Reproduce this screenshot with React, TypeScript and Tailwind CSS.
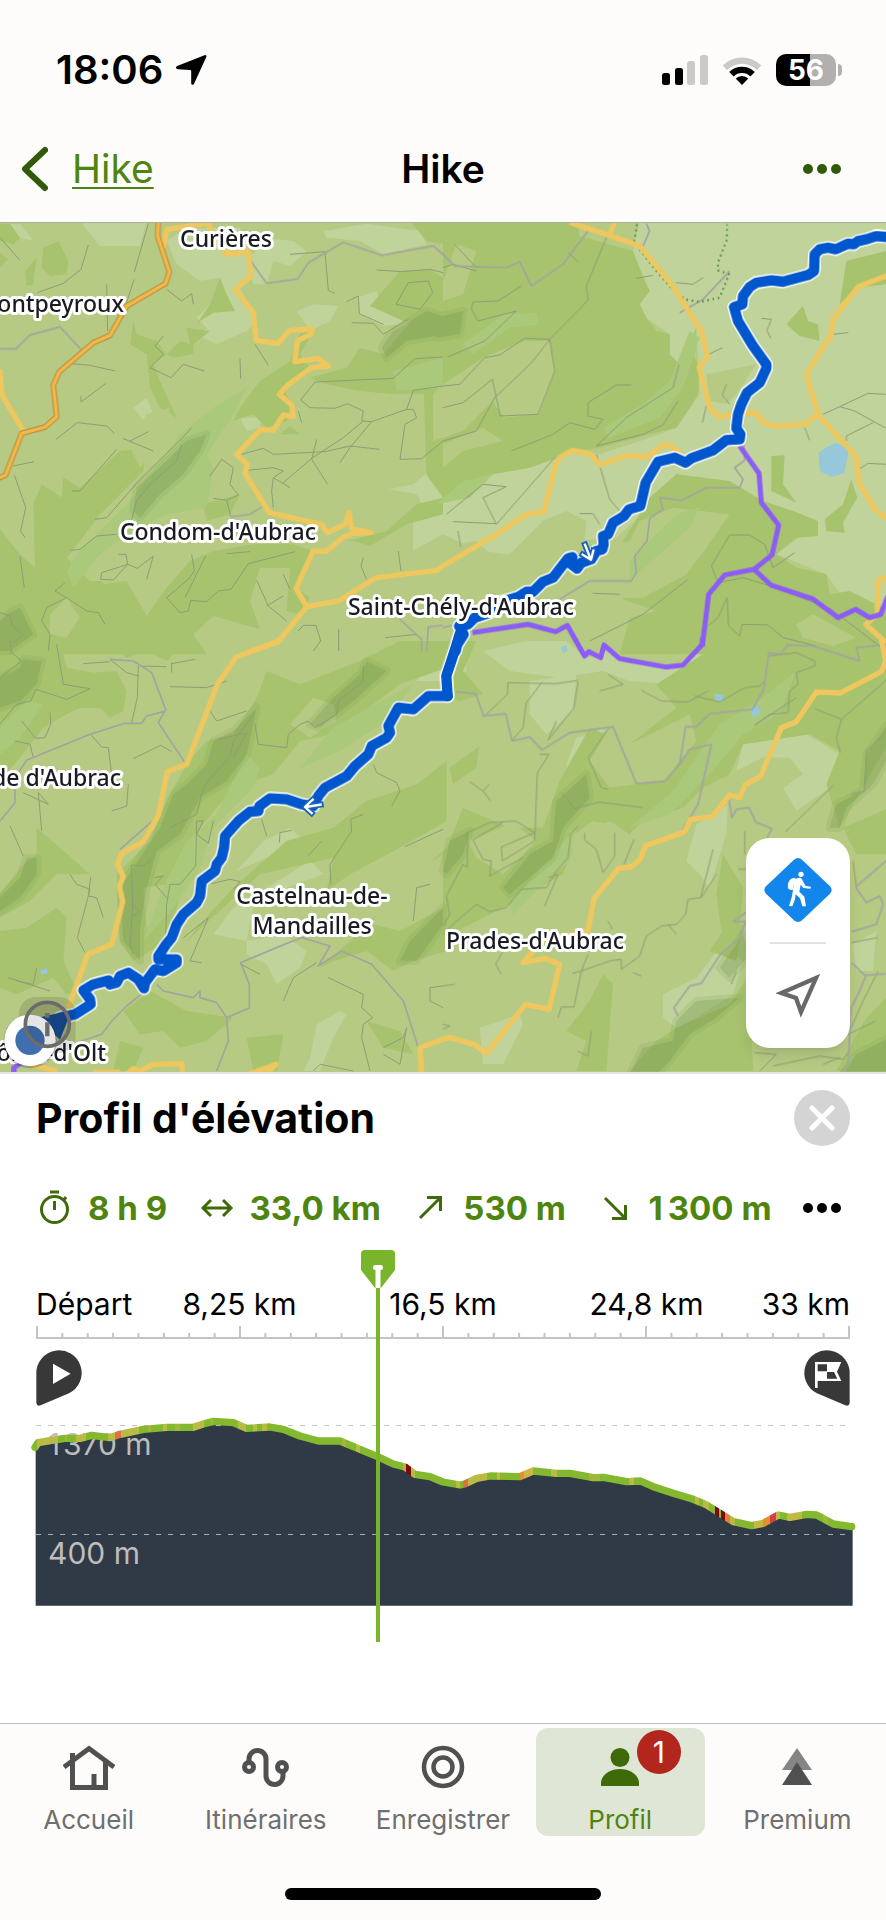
import { useState } from "react";

// Terrain is traced per quarter of the map, three units to a pixel
type Tile = {
    at: string;
    light: string;
    forest: string;
    base: string;
    valley: string;
    dark: string;
    paths: string;
    lanes: string;
    yellow: string;
    purple: string;
    route: string;
};

const tiles: Tile[] = [
    {
        at: "translate(1329 -6)",
        light: "M-90 900 0 830 150 760 260 740 400 690 470 700 620 650 700 620 770 520 760 320 710 430 680 400 680 340 610 290 590 250 620 210 570 90 590 0H1340V1200L1200 1130 1150 1060 1000 1000 1080 940 950 880 880 800 700 760 620 860 520 950 400 960 330 900 260 1000 160 1015 100 960-90 990Z",
        forest: "M0 0H400L410 45 570 90 600 170 620 210 590 250 610 290 640 330 680 340 680 400 710 430 760 320 750 400 770 440 765 520 740 560 700 620 620 640 470 680 400 690 260 740 150 760 0 830-50 760-60 430 0 300Z M620 830 700 760 860 780 960 840 1050 870 1125 900 1125 945 1060 950 1000 1000 1060 1040 1150 1060 1160 1120 1220 1110 1340 1170V1300H530L560 1190 640 1170 500 1120 540 960Z M1030 310 1080 255 1095 300 1125 310 1130 360 1070 345Z M985 705 1025 703 1020 790 1060 845 985 810Z M1225 775 1243 830 1200 905 1205 935 1150 930 1145 895 1200 850Z M1190 250 1210 120 1330 90V190L1240 200Z M10 745 120 690 180 710 70 800Z",
        base: "M-30 520 0 490 120 410 240 360 320 360 335 450 290 580 180 590 150 540 60 630-30 660Z M0 180 40 70 100 90 60 220 0 240Z M790 460 940 430 880 520 850 550 800 540Z M-90 990 0 940 110 990 200 1000 300 900 370 870 430 900 420 1000 560 960 590 900 690 860 860 880 790 980 730 1060 600 1130 480 1130 330 1200 0 1230Z M1060 1210 1110 1180 1240 1250 1170 1275 1080 1250Z M0 670 120 620 180 660 60 690 0 740Z",
        valley: "M480 620 600 550 680 480 740 330 770 350 720 500 650 590 500 650Z M60 370 180 280 280 275 290 310 200 320 90 400Z M560 1020 700 880 770 860 740 920 650 1000 560 1080Z M-20 850 60 780 150 760 80 830Z",
        dark: "M-20 290 60 270 50 340-20 350Z",
        paths: "M0 660 100 630 155 530 240 450 270 420 320 355 435 238 430 195 490 50 M320 355 335 450 285 580 172 585 148 475 60 545 0 560 M0 495 50 490 125 410 170 402 245 352 320 355 M235 195 165 240 90 243 85 265 105 300 220 270 125 360 15 408 M0 140 30 130 100 150 M565 492 520 492 435 545V585L480 595 455 625 380 605 330 640 205 690 M705 540 660 612 600 640 460 675 550 590 690 500 708 430 M838 380 797 400 M850 490 838 522 860 550 M790 555 778 605 M955 292 985 295 972 328 983 352 M1215 335 1170 340 M580 172 630 163 M700 185 750 190 780 170 M1140 580 1190 557 1275 517 1329 520 M1190 557 1235 570 1329 622 M1210 660V645L1290 605 M1248 745 1275 727 1329 730 M1085 620 1100 658 M10 880 120 790 190 797 120 830 160 910 335 710 M30 902 160 908 M460 700 500 835 530 870 M410 878H450L470 910 M805 1035 860 942H920L965 970 990 1040 1055 995 M805 1035 825 1085 900 1070 1000 1100 1165 1165 1329 1290 M852 1130 825 1190 795 1215 M852 1130 857 1215 890 1245 897 1210 975 1212 1020 1250 1120 1275 M450 1117 530 1120 M440 1260 600 1180 735 1075 M45 930 53 978 M35 70 100 140 M375 95 405 122",
        lanes: "M0 100 35 135 190 140 230 122 265 195 360 130 435 30 M710 275 780 235 860 150 M610 8 620 30 600 75 M900 610 905 718 875 740 900 775 890 800H790L715 838 650 830 660 865 620 892 612 960 575 1005 580 1055 565 1080H440L350 1135 0 1220",
        yellow: "M380 4 495 42 590 75 685 190 775 330 793 408 768 438 800 560 828 588 865 582 938 575 962 606 998 616 1085 610 1125 580 M500 40 515 4 M1335 163 1315 170 1245 198 1170 295 1163 343 1090 460 1125 580 1240 708 1248 785 1295 865 1335 895 M0 1035 160 940 250 880 303 873 335 738 350 710 388 688 440 698 472 732 550 703 612 707 667 668 715 695 M1335 1068 1305 1080 1303 1180 1268 1210 1329 1265",
        purple: "M890 675 948 757 955 845 1007 912 987 1002 933 1045 845 1062 797 1120 778 1275 M933 1045 985 1093 1110 1134 1185 1190 1238 1165 1280 1190 1313 1180 1335 1125 M88 1235 255 1210 338 1232 373 1213 400 1262",
        route: "M1350 50 1300 45 1270 55 1245 60 1232 70 1215 68 1178 85 1155 80 1130 85 1115 100 1113 150 1095 162 1020 182 985 178 940 185 920 198 900 225 898 250 873 258 885 300 930 375 970 430V442L950 485 912 515 895 550 885 580 880 622 892 640 890 655 850 657 810 688 745 712 728 725 695 710 645 722 608 785 592 855 558 865 543 885 510 905 495 940 480 945 482 970 478 985 460 990 445 1015 415 1025 402 1043 385 1030 388 1008 375 1012 330 1070 300 1082 270 1112 250 1112 225 1128 150 1150 140 1175 95 1190 75 1210 48 1215 62 1240 42 1272 38 1290",
    },
    {
        at: "translate(0 -6)",
        light: "M0 12 60 8 100 60 40 45Z M240 0H440L420 75H300Z M500 60 560 20H720L750 100 760 170 720 200 770 300 740 330 650 370 600 345 620 320 590 290 640 240 660 170 600 180 530 130Z M740 120 800 50 880 60 920 90 870 135 820 120 800 190 760 190Z M970 30 1100 8 1260 30 1280 70 1150 100 1080 60 980 50Z M1070 230 1130 210 1150 260 1230 260 1200 310 1150 315 1080 280Z M1165 805 1240 790 1329 715V830L1270 855 1250 820Z M890 270 940 250 1015 255 990 300 930 330Z M720 590 780 590 780 620 740 630Z M400 560 440 530 460 580 440 610Z M345 740 380 700 380 730Z",
        forest: "M0 925 20 950 60 1000 105 1040 100 850 125 790 185 830 190 770 240 800 360 690 440 680 430 750 300 880 240 960 200 1010 270 1080 380 1080 440 1185 500 1100 570 1020 640 990 760 970 880 970 940 990 890 1100 930 1130 900 1180 860 1170 870 1040 780 1040 750 1140 780 1225 640 1185 580 1240 620 1300H0Z M930 470 1040 440 1080 380 1150 400 1250 280 1340 260V520H1180L1080 510 980 490Z M1110 255 1200 150 1290 145 1329 170V310L1210 300Z M590 310 630 250 660 170 680 220 705 270 640 275 600 300Z M400 300 410 340 470 360 500 400 460 430 480 480 530 590 480 560 450 500 440 400 390 370Z M500 400 540 360 570 370 560 320 630 330 580 370V400L520 410Z M720 560 780 480 870 420 900 340 940 330 900 400 930 440 850 500 880 560 860 600 800 620 760 580 700 600Z M130 80 175 60 205 120 200 160 150 165 125 140Z M75 150 110 110 100 190 80 195Z M840 640 870 615 900 640Z M1040 960 1160 930 1250 850 1329 830V880L1220 910 1110 975 1060 960Z M0 8H30L60 50 40 70 0 60Z M0 95 25 115 0 140Z M1230 0H1340V70L1280 60Z M610 850 720 820 690 880 620 900Z",
        base: "M150 1180 200 1130 240 1190 200 1250 150 1240Z M300 1060 360 1010 400 1040 380 1080 310 1090Z M390 680 440 580 510 560 500 640 420 740Z",
        valley: "M240 990 400 830 540 640 640 560 740 500 700 580 620 700 640 740 620 860 500 880 400 930 300 1000 220 1100 200 1050Z M1180 450 1329 410V500L1190 510Z",
        dark: "M400 870 410 800 500 720 560 660 620 640 600 690 550 760 480 820 420 890Z M1145 380 1180 330 1280 270 1340 290V340L1220 360 1160 410Z M20 1180 60 1160 100 1240 30 1290 0 1290V1200Z",
        paths: "M0 50 60 118 M265 72 243 145 190 187 112 215 M445 8 403 153 M402 175 375 260 M320 190 323 330 M500 205 545 240 575 218 580 250 M450 440 513 470 550 430 613 450 M450 440 490 400 465 375 490 345 M215 428 270 433 345 450 M243 543 318 487 M243 525V543 M215 810 240 810 350 685 M285 895 320 890 420 775 548 650 575 620 M395 895 410 840 450 790 530 720 545 670 M168 655 232 605 320 615 343 637 M368 652 460 690 M390 660 445 632 M40 735 102 722 M43 762 77 860 62 930 75 950 M720 413 722 473 M765 370 805 433 M870 100 975 92 985 208 1005 218 M1040 242 1075 225 1078 278 1150 310 M1055 305 1120 307 1150 340 1225 295 M1130 147 1205 152 1290 145 1329 155 M1188 250 1225 185 1285 180 1298 215 1260 265Z M902 537 945 483 1180 472 1245 413 1329 408 M902 537 930 560 1005 562 1043 548 1090 570 1085 600 1115 602 1220 565 1240 508 1329 495 M1220 565H1240L1250 590 1215 610 1200 715 1265 713 1329 660 M725 700 790 682 820 700 975 692 1050 675 1138 685 M1090 600 1030 650 935 712 850 785 M1115 602 1050 680 1020 725 M950 655 935 715 983 790 M740 748 820 740 850 750 820 770 815 810 820 860 M820 770 870 800 M630 765 665 715 700 740 690 790 715 822 680 838 640 832 M680 838 692 885 M212 988 240 985 290 945 350 940 M355 1000H378L383 1030 305 1055 302 1075 340 1077 383 1030 412 1042 460 1005 440 1075 M575 1000 583 1050 570 1070 500 1130 540 1175 565 1170 572 1138 620 1142 655 1110 693 1105 745 1028 885 992 M617 1005 555 1130 M680 998 750 992 M770 1078 805 1155 860 1200 M800 1155 850 1125 M850 1060 870 1105 M1195 990 1203 1050 M1090 1010 1083 1035 1100 1075 M895 1230 910 1213H948L962 1260 940 1290 M1016 1225V1290 M1155 1250 1250 1240 M60 1005 73 1100 M200 1130 165 1110 195 1085 M200 1130 140 1160 125 1200 150 1240 145 1290 M200 1130 260 1170 295 1175 315 1210 M0 1175 30 1185 35 1210 68 1243 40 1265 M895 570 905 605",
        lanes: "M0 383H48L90 342 180 318 243 385 M752 120 800 187 893 174 925 125 1030 64 1145 103 1300 75 1329 100 M692 888 750 880 785 858 M1200 1195 1265 1255V1290 M1329 1213 1285 1218 1280 1290",
        yellow: "M635 4 500 25 490 80 M620 4 680 100 745 92 752 165 706 205 760 275 768 358 835 367 868 328 937 323 935 338 892 360 884 422 955 412 985 435 935 440 865 490 838 520 875 552 880 587 850 582 820 628 782 625 710 700 742 730 735 757 808 875 965 910 982 935 1035 910 1047 875 1055 923 1112 935 1060 937 1030 948 980 990 940 990 888 1102 920 1157 1015 1140 1128 1070 1310 1048 1329 1035 M920 1157 835 1262 740 1295 M0 445 5 520 70 630",
        purple: "",
        route: "",
    },
    {
        at: "translate(0 1254)",
        light: "M710 690 790 600 870 560 915 600 880 640 800 650Z M800 740 930 660 970 700 860 740 760 800 740 900 640 880 700 800Z M740 900 850 880 920 930 900 980 830 1030 800 970 740 940Z M930 1250 950 1150 1020 1110 1040 1120 1000 1190 960 1290H910Z M1250 120 1300 50 1329 40V120Z M560 390 600 360 640 370 670 400 600 410Z",
        forest: "M0 0H180L200 80 280 95 350 90 380 150 370 210 330 230 300 200 240 200 200 220 130 260 60 350 0 420Z M330 0H560L500 60 440 30 380 50Z M620 300 700 280 770 170 800 90 900 130 1080 60 1200 0H1340V80L1200 130 1000 280 900 300 820 400 700 440 600 560 560 700 500 900 400 960 360 900 350 700 450 600 500 480 560 370Z M560 900 600 850 700 740 860 600 1000 560 1100 480 1250 430 1340 360V540L1200 620 1050 700 980 750 1000 650 780 700Z M0 760 60 680 110 640V560L180 620 270 700H170L90 780 0 830Z M0 870 80 860 170 800 200 830 190 960 230 1050 200 1060 160 1010 50 1060 0 1040Z M370 1110 450 1050 560 1110 700 1130 620 1200 540 1220 490 1170 420 1180Z M960 980 1050 900 1130 820 1250 700 1340 620V930L1240 960 1180 990 1100 930 1000 960Z M360 1200 430 1220 400 1290H340Z M1100 1140 1200 1170 1240 1240 1150 1220Z M740 1190 850 1180 830 1290H760Z",
        base: "M870 250 940 170 1000 190 1010 240 930 290Z M1140 760 1250 690 1329 640V800L1200 870 1120 850Z M430 740 560 720 520 800 440 860Z",
        valley: "M480 760 560 600 650 520 740 340 780 380 760 440 640 560 600 680 520 800 430 900Z M1000 260 1160 170 1240 130 1160 240 1020 330 900 380Z M0 260 80 180 130 190 60 290 0 340Z",
        dark: "M770 200 740 340 680 420 600 470 540 580 470 630 440 740 420 860V960L370 900 360 740 480 560 520 460 560 430 620 370 640 300 700 270Z M0 110 60 80 70 55 125 60 110 130 60 180 0 200Z M930 250 1000 170 1080 100 1100 60 1160 90 1060 180 960 260Z M0 770 60 710 80 650 110 650 110 700 60 770 0 810Z M1200 960 1230 900 1300 830 1329 800V850L1250 960Z",
        paths: "M170 10 190 130 270 143 200 175 108 145 92 180 50 190 0 248 M30 0 35 35 65 60 0 110 M250 68 330 62 M330 55 380 95 415 105 M420 75 500 77 M415 75 412 170 395 245 M515 65V95 M515 68 585 55 M510 137 620 140 680 120 M272 280 305 318 325 320 335 400 M150 215 152 250 135 290 107 292 65 240 M45 300 90 310 100 350 M400 353 482 313 515 332 M630 210 650 240 740 210 M765 248 775 310 860 320 865 280 900 250 925 240 945 260 1010 220 1015 180 1090 120V75 M765 215 700 300 690 350 650 390 610 440 590 520 510 560 M655 295 740 275 700 350 M1120 370 1130 395 1190 425 1200 450 1175 495 M1215 617 1329 565 M993 730 990 670 1055 570 1052 535 1090 520 M925 643 965 600 M785 535 800 585 M838 605 840 575 875 568 M70 455 145 490 115 455 125 570 M30 555 70 645 M335 510 380 495 385 430 M590 540H610L590 580 625 607 640 540 M590 540 587 675 540 730H510L500 790 497 890 M465 710 490 705 465 730 500 770 M395 672 430 675 460 650 M395 672 398 800 390 910 400 940 M398 790 420 815 398 825 M210 700 230 730 270 745 265 765 232 890 255 935 M272 710 265 765 290 770 310 830 M635 728 690 715 720 722 700 745 M570 960 625 830 550 890 M570 960 605 965 M1240 840 1250 740 1290 730 M780 1000 720 968 M50 1020 100 1030 110 980 M25 1010 150 1050 M850 1080 880 1010 950 965 M985 1010 1090 1060 1085 1100 1118 1130 M1118 1130 1090 1150 1085 1190 1110 1290 M1290 1040 1329 1035 M1290 1040V1080L1329 1100 M940 1290 960 1270 1060 1290 M1150 1220 1210 1190 1220 1160 1200 1270 1150 1240",
        lanes: "M330 55 400 60 455 95 497 205 475 245 555 365 M490 212 440 225 425 247 375 247 270 280 80 358 45 410V485L0 540 M475 525 360 625 M430 1055 380 1095 340 1135 305 1180 200 1215 M470 1030 490 1050 580 1070 600 1050V1070L650 1085 680 1130 748 1100V1030L722 965 865 905 905 890 990 915 955 975 1025 930 1115 970 1210 1080 1255 1220 M680 1130 685 1200 650 1290",
        yellow: "M835 0 708 48 652 130 560 370 502 392 475 522 430 602 365 637 352 670 370 706 358 735 368 782 335 910 263 940 205 1100 M380 1300 400 1283 420 1290 460 1270 545 1268 548 1300 M745 1300 828 1270 800 1300 M1329 1195 1260 1220 1265 1300 M90 1270 170 1290 M280 1294H360",
        purple: "M42 1300V1280L70 1260",
        route: "M1343 165 1285 165 1240 205 1195 200 1165 255 1170 275 1160 290 1115 315 1105 340 1065 375 1040 405 975 440 955 465 940 495 905 490 860 475 810 472 778 495 775 510 750 512 715 540 675 585 672 620 665 650 650 670 645 690 605 720 600 765 590 785 550 820 530 850 515 890 497 912 475 945V955L530 955V965L490 990 465 985 435 1025 432 1042 415 1015 385 995 360 1005 350 1025 330 1030 325 1018 280 1030 250 1048 270 1075 272 1090 225 1120 180 1130 165 1160",
    },
    {
        at: "translate(1329 1254)",
        light: "M120 30 250 0H370L430 50 500 30 530 60 690 80 790 10 820 40 690 130 560 120 480 90 350 110 200 90Z M260 120 400 100 390 210 310 280 260 220Z M900 310 1090 280 1190 340V420L1060 510 1020 440 1080 400 1040 350 960 350 880 390Z M730 660 760 550 855 490 850 580 800 740 770 700Z M370 370 400 290 490 260 410 360 400 460Z M110 1160 230 1120 240 1150 180 1270 120 1270Z M660 1060 760 1010 830 920 900 960 870 1060 760 1130 700 1160 660 1130Z M0 30 70 0V90L20 110Z M1230 910 1300 870 1290 990 1240 990Z M1170 440 1250 430 1220 480Z",
        forest: "M640 130 780 40 900 0H1340V300L1190 560 1150 430 1190 330 1100 280 900 310 860 400 780 440 720 500 600 540 560 580 500 540 400 600 360 700 200 790 60 860 0 900V650L60 500 200 560 300 560 350 420 440 260 560 310 700 200Z M0 0H100L60 90 120 160 50 180 0 160Z M20 380 110 315 100 380 30 430Z M370 1170 440 1080 480 1000 510 1030 490 1290H400L430 1200Z M560 1290 640 1200 700 1160 860 1090 920 1000 930 1290Z M1200 560 1340 500V640L1240 640Z M840 640 900 740 890 860 840 900 820 760Z M1270 1130 1340 1060V1290H1180Z M800 930 840 870 900 850 880 960Z",
        base: "M440 360 500 260 560 310 740 220 760 300 660 420 580 430 500 440Z M380 590 450 540 500 550 540 650 430 760 400 680Z M75 600 210 545 280 600 180 700 100 650Z M880 390 960 350 1040 350 1080 400 1020 440 1060 510 1150 450 1160 560 900 560 870 470Z",
        valley: "M560 560 690 450 830 250 960 170 1060 90 1010 220 900 280 800 400 680 520Z M200 790 330 640 400 560 380 660 310 720 210 820Z",
        dark: "M180 740 260 640 330 600 340 480 430 400 440 470 360 560 330 650 200 760Z M560 1300 600 1220 690 1200 700 1140 760 1080 890 1070 820 1130 740 1180 680 1260 640 1300Z M1200 1300 1240 1240 1340 1190V1300Z M1160 560 1180 490 1260 450 1270 340 1340 240V340L1290 430 1210 500 1190 560Z M0 690 20 600 80 570 60 640 10 700Z M830 980 900 880 920 940 860 1010Z",
        paths: "M195 125 340 128 405 118 M195 125 193 160 130 220 M298 122 250 185 240 260 207 298 M405 122 393 200 315 298 340 240 M470 150 540 130 495 100 M595 148 655 180 735 183 795 150 M755 165 830 183 905 140 950 135 965 120 M980 45 1060 35 1115 60V75L1060 95 1065 130 1040 150 1035 215 980 220 935 253 1000 210 1060 170 M1115 203 1195 235 1329 118 M1195 235 1180 290 1192 335 M1329 275 1270 330 1265 450 1225 460 M500 258 435 350 475 440 495 445 M355 455 395 503 468 483 600 500 M290 340H318L283 395 275 600 178 660 175 618 275 575 218 540 140 545 73 575V680L60 670 10 765 20 820 0 855 M178 545 90 597 120 655 145 660 140 705 240 650 M405 555 383 580 375 650 340 690 310 740 235 745 190 800 140 812 100 790 35 845 0 880 M425 575V597L460 625 480 695 515 645V575 M573 595 543 670 M305 795 345 700 315 710 M80 422 120 450 143 480 M120 450 138 430 M1172 432 1027 573 M810 625 773 770 735 775 728 820 700 850 655 855 610 885 590 945 535 985V955L500 960 415 990 388 997 M435 940 415 990 393 1098H355L345 1130 M820 700 775 770 M675 850 700 880 M495 840 508 865 M158 970 180 930 M158 970 175 1000 M570 995 595 1005 M0 1035 35 1030 M435 1245 445 1170 M435 1245 403 1230 M1215 1180 1298 1140 M1140 1270 1190 1250 M990 1275 1130 1245 1200 1255 1220 1230 M935 1235 1000 1240 950 1290 M1230 660 1240 740 M1305 990 1260 1080 1220 1170 M0 1150 20 1155 0 1165 M885 685H910 M905 570V640 M865 1030 880 990 M1305 890 1225 905",
        lanes: "M40 152 98 158 122 225 188 218 207 300 260 288 297 327 380 275 510 257 580 428 668 420 710 370 728 257H760L800 218 928 205 962 145 978 35 1010 40 1035 12 1110 15 1250 60 1240 20 1329 10 M710 370 740 325 805 310 765 490 717 570 M857 470 867 530 880 505 918 500 938 543 987 563 972 590 M1329 660 1238 738 1270 785 1310 765 1320 790 1300 850 1225 872 M912 812 870 842H908L890 890 832 940 775 1027 740 1035 693 1100 705 1125 M1225 965 1268 1005 1250 1050 1225 1100 1215 1270 1190 1300 M1268 1003 1329 998",
        yellow: "M1315-5 1328 60 1315 92 1192 156 1120 153 1060 242 1015 260 953 405 905 433 890 470 860 462 808 527 743 535 725 572 607 615 592 655 565 678 527 682 453 772 435 870 300 900 240 965 305 952 350 970 318 1105 248 1090 130 1237 93 1210 22 1190-5 1195",
        purple: "M398-2 425 45 437 32 473 50 483 12 530 53 668 78 720 72 778 10V-10",
        route: "M50-20 38 20 10 105 14 165",
    },
];

const ORANGE_ROAD = "M475-6 473 39 508 146 497 181 380 249 330 337 280 359 178 446 160 486 170 581 135 612 65 631 17 756-5 766";
const LAKES = "M2455 690 2480 672 2508 660 2540 672 2545 690 2533 750 2495 762 2460 745Z M1683 1274 1700 1265 1702 1285 1690 1292Z M2143 1412 2170 1415 2168 1436 2148 1434Z M2258 1448 2272 1450 2284 1465 2268 1480 2253 1480Z M120 2242 140 2236 144 2250 125 2256Z";

const places = [
    { name: "Curières", x: 226, y: 24 },
    { name: "ontpeyroux", x: 124, y: 89, end: true },
    { name: "Condom-d'Aubrac", x: 218, y: 317 },
    { name: "Saint-Chély-d'Aubrac", x: 461, y: 392 },
    { name: "de d'Aubrac", x: 121, y: 563, end: true },
    { name: "Castelnau-de-", x: 312, y: 681 },
    { name: "Mandailles", x: 312, y: 711 },
    { name: "Prades-d'Aubrac", x: 535, y: 726 },
    { name: "ôme-d'Olt", x: 106, y: 838, end: true },
];

function StatusBar() {
    return (
        <div className="flex h-29 items-center justify-between pt-6 pr-11 pl-14">
            <div className="flex items-center gap-3">
                <span className="text-[40px] font-semibold">18:06</span>
                <svg width="32" height="32" viewBox="0 0 32 32">
                    <path d="M29.5 1.2c1.3-.6 2.3.4 1.8 1.8L19.200 29.500c-.8 2-3 1.600-3-.6V17.500c0-.9-.3-1.300-1.100-1.400L3 15.200c-2.400-.2-2.600-2.300-.8-3.200z" />
                </svg>
            </div>
            <div className="flex items-center gap-3.5">
                <svg width="46" height="32" viewBox="0 0 46 32">
                    <rect y="19" width="8" height="12" rx="2.5" />
                    <rect x="13" y="14" width="8" height="17" rx="2.5" />
                    <rect x="25" y="7" width="8" height="24" rx="2.5" fill="#cbcac8" />
                    <rect x="38" y="1" width="8" height="30" rx="2.5" fill="#cbcac8" />
                </svg>
                <svg width="40" height="30" viewBox="0 0 40 30">
                    <path d="M.8 10.500a27 27 0 0 1 38.400 0l-4.300 4.500a21 21 0 0 0-29.800 0z" fill="#cbcac8" />
                    <path d="M7.200 17a18 18 0 0 1 25.600 0l-4.400 4.500a12 12 0 0 0-16.800 0z" />
                    <path d="M13.700 23.600a9 9 0 0 1 12.600 0L20 30z" />
                </svg>
                <div className="flex items-center gap-0.5">
                    <div className="flex h-8 w-15 items-center justify-center rounded-[10px] bg-linear-to-r from-black from-56% to-[#b1b0af] to-56% text-[28px] font-bold text-white">
                        56
                    </div>
                    <div className="h-3 w-1 rounded-r-full bg-[#b1b0af]" />
                </div>
            </div>
        </div>
    );
}

function Dots({ className }: { className: string }) {
    return (
        <svg width="40" height="12" viewBox="0 0 40 12" fill="currentColor" className={className}>
            <circle cx="6" cy="6" r="5" />
            <circle cx="20" cy="6" r="5" />
            <circle cx="34" cy="6" r="5" />
        </svg>
    );
}

function HikeMap() {
    const layer = (key: Exclude<keyof Tile, "at">) => tiles.map((t) => <path key={t.at} transform={t.at} d={t[key]} />);

    return (
        <svg className="block w-full" viewBox="0 0 886 849" role="img" aria-label="Carte">
            <rect width="886" height="849" fill="#b6ca83" />
            <g transform="scale(0.33333)" fill="none" strokeLinejoin="round">
                <g fill="#bfd39a">{layer("light")}</g>
                <g fill="#a7c36e">{layer("forest")}</g>
                <g fill="#b6ca83">{layer("base")}</g>
                <g fill="#aac97b">{layer("valley")}</g>
                <g fill="#6f9048" opacity="0.14" stroke="#6f9048" strokeWidth="24">{layer("dark")}</g>
                <g fill="#6f9048" opacity="0.25">{layer("dark")}</g>
                <path d={LAKES} fill="#97c8d9" />
                <g stroke="#909c76" strokeWidth="3">{layer("paths")}</g>
                <g stroke="#a3a4a0" strokeWidth="5">{layer("lanes")}</g>
                <g stroke="#5f9250" strokeWidth="7" strokeDasharray="5 11" transform="translate(1329 -6)">
                    <path d="M582 10 574 60 590 85 640 150 685 200 725 235 770 243 830 230 858 160 825 148V125L852 55V10" />
                </g>
                <g stroke="#eec75f" strokeWidth="16">{layer("yellow")}</g>
                <path d={ORANGE_ROAD} stroke="#bd9140" strokeWidth="17" />
                <path d={ORANGE_ROAD} stroke="#f2b94a" strokeWidth="10" />
                <g stroke="#8b5cf6" strokeWidth="15">{layer("purple")}</g>
                <g stroke="#fff" strokeWidth="40" strokeLinecap="round">{layer("route")}</g>
                <g stroke="#0056cc" strokeWidth="31" strokeLinecap="round">{layer("route")}</g>
                {/* walking direction */}
                <g strokeLinecap="square">
                    <path d="M1755 965 1771 1006M1748 995 1773 1010 1780 983" stroke="#1c62bd" strokeWidth="18" />
                    <path d="M1755 965 1771 1006M1748 995 1773 1010 1780 983" stroke="#fff" strokeWidth="7" />
                    <path d="M962 1745 918 1752M938 1730 915 1752 935 1770" stroke="#1c62bd" strokeWidth="18" />
                    <path d="M962 1745 918 1752M938 1730 915 1752 935 1770" stroke="#fff" strokeWidth="7" />
                </g>
            </g>
            <g className="font-['Noto_Sans'] text-[23px] font-medium" fill="#1a1a22" stroke="#fff" strokeWidth="6" strokeLinejoin="round" paintOrder="stroke">
                {places.map((p) => (
                    <text key={p.name} x={p.x} y={p.y} textAnchor={p.end ? "end" : "middle"}>
                        {p.name}
                    </text>
                ))}
            </g>
            {/* current position, with the trail end ring over it */}
            <g transform="scale(0.33333)">
                <rect x="57" y="2322" width="170" height="168" rx="50" fill="#000" opacity="0.12" />
                <path d="M110 2385 215 2362 180 2450Z" fill="#174a92" />
                <circle cx="90" cy="2456" r="80" fill="#000" opacity="0.2" />
                <circle cx="90" cy="2452" r="77" fill="#fff" />
                <circle cx="90" cy="2452" r="44" fill="#3f6fae" />
                <circle cx="142" cy="2404" r="66" fill="#000" fillOpacity="0.1" stroke="#6b6b6b" strokeWidth="11" />
                <path d="M142 2370V2384M142 2398V2440" stroke="#6b6b6b" strokeWidth="13" />
            </g>
        </svg>
    );
}

function MapControls() {
    return (
        <div className="absolute right-9 bottom-6 flex w-26 flex-col items-center rounded-[24px] bg-white shadow-lg">
            <button aria-label="Randonnée" className="flex h-26 w-full items-center justify-center">
                <svg width="68" height="64" viewBox="0 0 204 192">
                    <path d="M90 5q12-10 24 0l84 80q10 11 0 22l-84 80q-12 10-24 0L6 107q-10-11 0-22z" fill="#1286ea" />
                    <g fill="#fff">
                        <circle cx="111" cy="49" r="8" />
                        <path d="M95 60q-17-2-22 14-5 18 5 21l8 1z" />
                        <path d="M99 61q10-4 15 3l10 19 16 3q3 5-2 6l-20-2-8-10-4 21 15 15 5 29H115l-7-24-13-12-2 15-8 21-10-1 9-29 6-39q-9 5-9 13-5 4-6-2 1-15 14-21z" />
                    </g>
                </svg>
            </button>
            <div className="h-0.5 w-14 bg-[#e2e2e2]" />
            <button aria-label="Ma position" className="flex h-26 w-full items-center justify-center">
                <svg width="44" height="44" viewBox="0 0 132 132">
                    <path d="M120 12 16 57l44 15 15 42z" fill="none" stroke="#686868" strokeWidth="13" />
                </svg>
            </button>
        </div>
    );
}

const stats = [
    {
        label: "8 h 9",
        icon: <path d="M11 2h9M15.500 11v9M27 7l-3 4M15.500 6.500a13 13 0 1 1 0 26 13 13 0 0 1 0-26z" />,
    },
    { label: "33,0 km", icon: <path d="M2 18h28M10 10l-8 8 8 8M22 10l8 8-8 8" /> },
    { label: "530 m", icon: <path d="M6 28 26 8M13 7.500h13.500V21" /> },
    { label: "1\u2009300 m", icon: <path d="M6 8l20 20M13 28.500h13.500V15" /> },
];

// Horizontal extent of each stretch that is steeper than the default green
const slopes: [number, number, string][] = [
    [112, 175, "#b9bb45"], [195, 202, "#9fb83a"], [228, 258, "#b9bb45"], [325, 345, "#b9bb45"], [345, 363, "#e07048"],
    [363, 418, "#b9bb45"], [443, 452, "#9fb83a"], [490, 502, "#b9bb45"], [526, 540, "#9fb83a"], [578, 612, "#b9bb45"],
    [632, 640, "#9fb83a"], [715, 738, "#b9bb45"], [760, 770, "#b9bb45"], [785, 800, "#b9bb45"], [1026, 1038, "#9fb83a"],
    [1068, 1080, "#b9bb45"], [1210, 1217, "#c9a93f"], [1217, 1233, "#7c0a0a"], [1233, 1244, "#b9bb45"],
    [1368, 1380, "#b9bb45"], [1388, 1404, "#dd6f47"], [1404, 1460, "#b9bb45"], [1490, 1500, "#c9b545"],
    [1560, 1572, "#e3902e"], [1572, 1600, "#cdb548"], [1654, 1670, "#b9bb45"], [1768, 1800, "#9fb83a"],
    [1888, 1902, "#b9bb45"], [2084, 2096, "#b9bb45"], [2110, 2126, "#b9bb45"], [2146, 2158, "#7c0a0a"],
    [2162, 2175, "#7c0a0a"], [2175, 2190, "#e07f45"], [2190, 2206, "#b9bb45"], [2261, 2289, "#c4b845"],
    [2289, 2309, "#e3902e"], [2309, 2327, "#d43f47"], [2327, 2340, "#b9bb45"], [2361, 2406, "#c4b845"],
    [2468, 2484, "#9fb83a"],
];

const CHART_LEFT = 105;
const CHART_RIGHT = 2558;
const PROFILE =
    "105 322 114 308 150 302 195 295 240 295 275 286 330 293 360 283 430 268 500 262 580 262 610 252 640 244 700 248 740 265 810 261 850 268 900 288 955 303 1020 303 1080 328 1133 350 1180 372 1215 381 1245 403 1290 410 1329 426 1381 435 1394 432 1430 415 1470 408 1560 410 1600 393 1670 400 1710 400 1780 413 1810 412 1880 425 1920 423 1960 440 2020 460 2080 478 2120 495 2160 520 2200 545 2255 557 2290 550 2335 525 2370 532 2420 523 2450 525 2500 552 2555 560";

function ElevationChart() {
    const offset = (x: number) => (x - CHART_LEFT) / (CHART_RIGHT - CHART_LEFT);

    return (
        <svg className="mt-1 block w-full overflow-visible" viewBox="0 0 814 280" role="img" aria-label="Profil d'élévation">
            <defs>
                <linearGradient id="slope" gradientUnits="userSpaceOnUse" x1={CHART_LEFT} x2={CHART_RIGHT} y1="0" y2="0">
                    {slopes.flatMap(([from, to, color]) => [
                        <stop key={`${from}-a`} offset={offset(from)} stopColor="#84b82e" />,
                        <stop key={`${from}-b`} offset={offset(from)} stopColor={color} />,
                        <stop key={`${from}-c`} offset={offset(to)} stopColor={color} />,
                        <stop key={`${from}-d`} offset={offset(to)} stopColor="#84b82e" />,
                    ])}
                </linearGradient>
            </defs>

            {/* distance ruler */}
            <g stroke="#c4c4c4" strokeWidth="2">
                <path d="M0 12H814" />
                {Array.from({ length: 33 }, (_, i) => (
                    <path key={i} d={`M${1 + i * 25.375} ${i % 8 === 0 ? 0 : 7}V12`} />
                ))}
            </g>

            <g transform="scale(0.33333) translate(-108 42)">
                <path d="M109 190V101A68 68 0 1 1 207 160L122 196Q111 200 109 190Z" fill="#383838" />
                <path d="M159 71V132L212 101Z" fill="#fff" />
                <path d="M2549 190V101A68 68 0 1 0 2451 160L2536 196Q2547 200 2549 190Z" fill="#383838" />
                <path d="M2445 66H2524L2511 95 2524 123H2453V144H2445Z" fill="#fff" />
                <path d="M2453 73H2481V94H2453ZM2481 96H2502L2512 116H2481Z" fill="#383838" />
                <path d={`M107 797V322L${PROFILE} 2558 565V797Z`} fill="#2f3a46" />
            </g>
            <g strokeWidth="1" strokeDasharray="5 7">
                <path d="M0 99.5H814" stroke="#c4c4c4" />
                <path d="M0 208.5H814" stroke="#a9adb0" />
            </g>
            <g fill="#bdbdbd" className="text-[30px]">
                <text x="12" y="129">{"1\u200a370 m"}</text>
                <text x="12" y="238">400 m</text>
            </g>
            <g transform="scale(0.33333) translate(-108 42)">
                <path d={`M${PROFILE}`} fill="none" stroke="url(#slope)" strokeWidth="22" strokeLinecap="round" strokeLinejoin="round" />
            </g>
        </svg>
    );
}

function ElevationPanel() {
    return (
        <section className="flex-1 border-t-2 border-[#e4e4e4] bg-white px-9 pt-4">
            <div className="flex items-center justify-between">
                <h2 className="text-[41px] leading-14 font-bold">Profil d'élévation</h2>
                <button aria-label="Fermer" className="flex size-14 items-center justify-center rounded-full bg-[#d4d4d4]">
                    <svg width="26" height="26" viewBox="0 0 26 26" fill="none" stroke="#fff" strokeWidth="5" strokeLinecap="round">
                        <path d="M3 3l20 20M23 3 3 23" />
                    </svg>
                </button>
            </div>

            <div className="mt-11 flex items-center justify-between pr-2">
                {stats.map((s) => (
                    <div key={s.label} className="flex items-center gap-4 text-[33px] leading-9 font-bold text-[#4f850f]">
                        <svg width="36" height="36" viewBox="-3 0 36 36" fill="none" stroke="#3f6a0a" strokeWidth="3">
                            {s.icon}
                        </svg>
                        <span className="whitespace-nowrap">{s.label}</span>
                    </div>
                ))}
                <button aria-label="Plus de données">
                    <Dots className="text-black" />
                </button>
            </div>

            <div className="relative mt-6 pt-9 pb-9">
                <div className="grid grid-cols-[1fr_2fr_2fr_2fr_1fr] text-center text-[30px] leading-9 whitespace-nowrap">
                    <span className="text-left">Départ</span>
                    <span>8,25 km</span>
                    <span>16,5 km</span>
                    <span>24,8 km</span>
                    <span className="flex justify-end">33 km</span>
                </div>
                <ElevationChart />
                <div className="absolute inset-y-0 left-[42%] flex w-9 -translate-x-1/2 flex-col items-center">
                    <svg width="34" height="38" viewBox="0 0 34 38" className="shrink-0">
                        <path d="M4 0h26q4 0 4 4v16L20 38h-6L0 20V4q0-4 4-4z" fill="#78b52d" />
                        <path d="M14 15h6q2 0 2 2.500T19.500 20v18h-5V20Q12 20 12 17.500T14 15z" fill="#fff" />
                    </svg>
                    <div className="w-1 flex-1 bg-[#78b52d]" />
                </div>
            </div>
        </section>
    );
}

const tabs = [
    {
        label: "Accueil",
        icon: (
            <g fill="none" stroke="#505050" strokeWidth="5">
                <path d="M1 27 26 8.500 51 27M9.500 13v34.500h33V22M31 48V34" />
            </g>
        ),
    },
    {
        label: "Itinéraires",
        icon: (
            <g fill="none" stroke="#505050" strokeWidth="5">
                <circle cx="9" cy="27" r="4.5" />
                <circle cx="42" cy="27" r="4.5" />
                <path d="M9 22v-3a8.500 8.500 0 0 1 17 0v17a8.500 8.500 0 0 0 17 0v-4" />
            </g>
        ),
    },
    {
        label: "Enregistrer",
        icon: (
            <g fill="none" stroke="#505050" strokeWidth="4.5">
                <circle cx="26" cy="27" r="19" />
                <circle cx="26" cy="27" r="9.5" />
            </g>
        ),
    },
    {
        label: "Profil",
        badge: 1,
        icon: (
            <g fill="#3f6a0a">
                <circle cx="26" cy="17.5" r="9.5" />
                <path d="M7 46v-3c0-8 9-14 19-14s19 6 19 14v3z" />
            </g>
        ),
    },
    {
        label: "Premium",
        icon: (
            <>
                <path d="M26 8 41 30H11z" fill="#858585" />
                <path d="M26 22 41 45H11z" fill="#505050" />
            </>
        ),
    },
];

function TabBar() {
    const [active, setActive] = useState("Profil");

    return (
        <nav className="border-t border-[#bdbdbd] bg-[#fdfcfa] pt-1">
            <div className="grid grid-cols-5">
                {tabs.map((tab) => (
                    <button
                        key={tab.label}
                        onClick={() => setActive(tab.label)}
                        className={`relative mx-1 flex h-27 flex-col items-center rounded-xl pt-3 text-[26px] leading-8 ${
                            active === tab.label ? "bg-[#dfe6d6] text-[#4f850f]" : "text-[#6f6f6f]"
                        }`}
                    >
                        <svg width="52" height="52" viewBox="0 0 52 52" className="mb-3 shrink-0">
                            {tab.icon}
                        </svg>
                        {tab.label}
                        {tab.badge && (
                            <span className="absolute top-0.5 right-6 flex size-11 items-center justify-center rounded-full bg-[#b3261e] text-[30px] text-white">
                                {tab.badge}
                            </span>
                        )}
                    </button>
                ))}
            </div>
            <div className="flex justify-center pt-13 pb-5">
                <div className="h-3 w-[316px] rounded-full bg-black" />
            </div>
        </nav>
    );
}

export default function App() {
    return (
        <div className="flex min-h-screen flex-col bg-[#fdfcfa] font-['Inter',sans-serif] text-black">
            <header className="border-b border-[#a9a9a5]">
                <StatusBar />
                <div className="grid h-[106px] grid-cols-[1fr_auto_1fr] items-center px-5 text-[39px]">
                    <a href="#" className="flex items-center gap-6 text-[#4f850f]">
                        <svg width="28" height="46" viewBox="0 0 28 46" fill="none" stroke="#315a08" strokeWidth="6" strokeLinecap="round" strokeLinejoin="round">
                            <path d="M25 4 5 23l20 19" />
                        </svg>
                        <span className="underline decoration-2 underline-offset-4">Hike</span>
                    </a>
                    <h1 className="font-semibold">Hike</h1>
                    <button aria-label="Plus" className="mr-6 justify-self-end">
                        <Dots className="text-[#315a08]" />
                    </button>
                </div>
            </header>
            <main className="flex flex-1 flex-col">
                <div className="relative">
                    <HikeMap />
                    <MapControls />
                </div>
                <ElevationPanel />
            </main>
            <TabBar />
        </div>
    );
}
